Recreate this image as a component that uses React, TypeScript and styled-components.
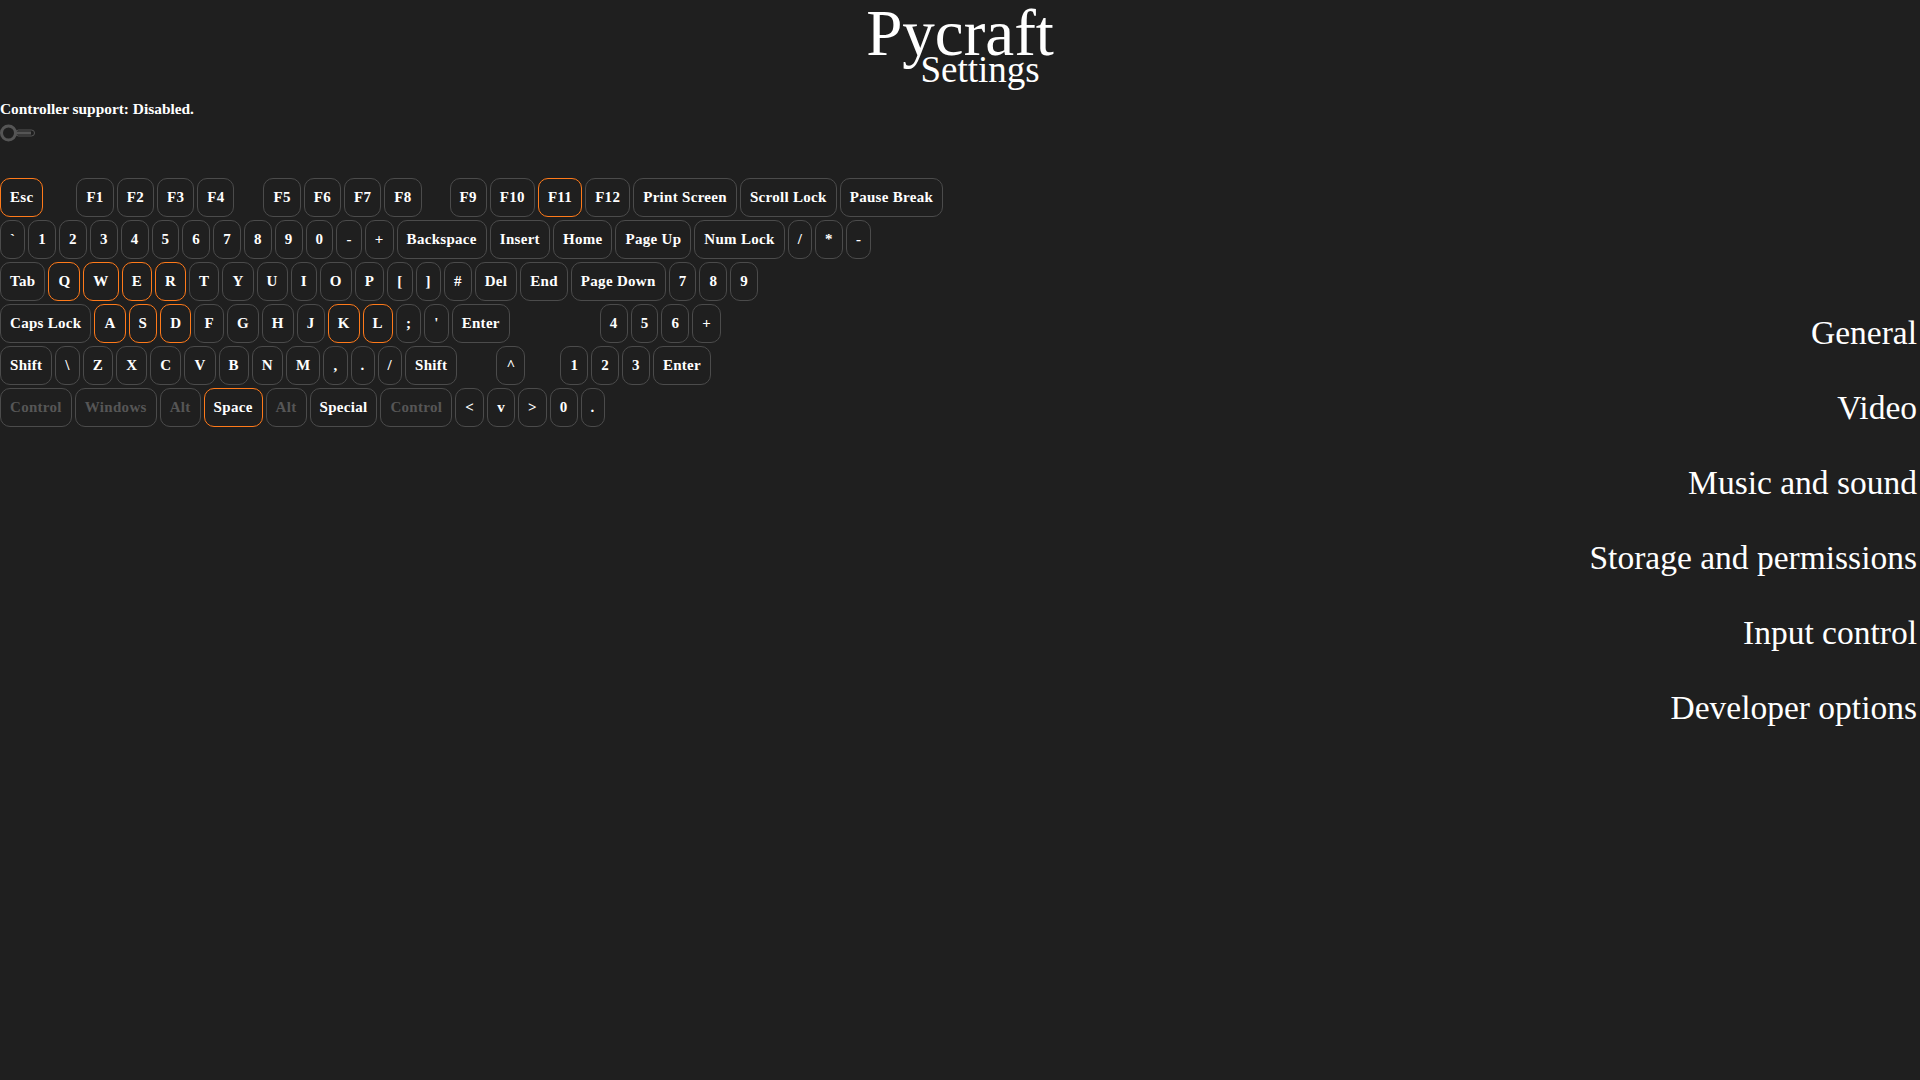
import React from "react";
import styled, { createGlobalStyle } from "styled-components";

const GlobalStyle = createGlobalStyle`
  html, body {
    margin: 0;
    padding: 0;
    background: #1f1f1f;
    color: #ffffff;
    font-family: "Liberation Serif", "Times New Roman", serif;
  }
  #root { min-height: 1080px; }
`;

const Page = styled.div`
  width: 1920px;
  height: 1080px;
  background: #1f1f1f;
  display: flex;
  flex-direction: column;
  overflow: hidden;
`;

const Header = styled.header`
  display: flex;
  flex-direction: column;
  align-items: center;
  padding-top: 7px;
`;

const Title = styled.h1`
  margin: 0;
  font-weight: 400;
  font-size: 65px;
  line-height: 52px;
  color: #ffffff;
`;

const Subtitle = styled.div`
  font-size: 37px;
  line-height: 21px;
  padding-left: 40px;
  color: #ffffff;
`;

const Body = styled.div`
  display: flex;
  justify-content: space-between;
  align-items: flex-start;
  padding-top: 3px;
`;

const LeftColumn = styled.div`
  display: flex;
  flex-direction: column;
  padding-top: 17px;
`;

const Status = styled.div`
  font-size: 15.4px;
  font-weight: 700;
  line-height: 18px;
  color: #ffffff;
`;

const ToggleWrap = styled.div`
  margin-top: 6px;
  height: 19px;
  width: 36px;
`;

const Keyboard = styled.div`
  margin-top: 35px;
  display: flex;
  flex-direction: column;
  gap: 3px;
`;

const Row = styled.div`
  display: flex;
  gap: 3px;
`;

type Variant = "normal" | "active" | "disabled";

const Key = styled.div<{ $variant: Variant }>`
  box-sizing: border-box;
  height: 39px;
  padding: 0 9px;
  border: 1px solid
    ${(p) => (p.$variant === "active" ? "#ff7a1a" : "#4b4b4b")};
  border-radius: 10px;
  display: flex;
  align-items: center;
  justify-content: center;
  font-size: 15px;
  font-weight: 700;
  letter-spacing: 0.3px;
  white-space: nowrap;
  color: ${(p) => (p.$variant === "disabled" ? "#565656" : "#ffffff")};
`;

const Spacer = styled.div<{ $w: number }>`
  width: ${(p) => p.$w}px;
  flex: none;
`;

const Nav = styled.nav`
  display: flex;
  flex-direction: column;
  align-items: flex-end;
  padding-top: 212px;
  padding-right: 3px;
`;

const NavItem = styled.div`
  font-size: 33.5px;
  line-height: 75px;
  color: #ffffff;
  white-space: nowrap;
`;

type Item = { l?: string; v?: Variant; s?: number };

const A: Variant = "active";
const D: Variant = "disabled";

const k = (l: string, v: Variant = "normal"): Item => ({ l, v });
const sp = (s: number): Item => ({ s });

const rows: Item[][] = [
  [
    k("Esc", A), sp(27), k("F1"), k("F2"), k("F3"), k("F4"), sp(23),
    k("F5"), k("F6"), k("F7"), k("F8"), sp(22), k("F9"), k("F10"),
    k("F11", A), k("F12"), k("Print Screen"), k("Scroll Lock"), k("Pause Break"),
  ],
  [
    k("`"), k("1"), k("2"), k("3"), k("4"), k("5"), k("6"), k("7"), k("8"),
    k("9"), k("0"), k("-"), k("+"), k("Backspace"), k("Insert"), k("Home"),
    k("Page Up"), k("Num Lock"), k("/"), k("*"), k("-"),
  ],
  [
    k("Tab"), k("Q", A), k("W", A), k("E", A), k("R", A), k("T"), k("Y"),
    k("U"), k("I"), k("O"), k("P"), k("["), k("]"), k("#"), k("Del"),
    k("End"), k("Page Down"), k("7"), k("8"), k("9"),
  ],
  [
    k("Caps Lock"), k("A", A), k("S", A), k("D", A), k("F"), k("G"), k("H"),
    k("J"), k("K", A), k("L", A), k(";"), k("'"), k("Enter"), sp(84),
    k("4"), k("5"), k("6"), k("+"),
  ],
  [
    k("Shift"), k("\\"), k("Z"), k("X"), k("C"), k("V"), k("B"), k("N"),
    k("M"), k(","), k("."), k("/"), k("Shift"), sp(33), k("^"), sp(29),
    k("1"), k("2"), k("3"), k("Enter"),
  ],
  [
    k("Control", D), k("Windows", D), k("Alt", D), k("Space", A), k("Alt", D),
    k("Special"), k("Control", D), k("<"), k("v"), k(">"), k("0"), k("."),
  ],
];

const navItems = [
  "General",
  "Video",
  "Music and sound",
  "Storage and permissions",
  "Input control",
  "Developer options",
];

const Toggle = () => (
  <svg width="36" height="19" viewBox="0 0 36 19">
    <rect x="15.5" y="6" width="19" height="6" rx="3" fill="none" stroke="#555" strokeWidth="1" />
    <rect x="15" y="7.5" width="16" height="3" fill="#555" />
    <circle cx="8.5" cy="9" r="7" fill="none" stroke="#555" strokeWidth="3" />
  </svg>
);

export default function App() {
  return (
    <Page>
      <GlobalStyle />
      <Header>
        <Title>Pycraft</Title>
        <Subtitle>Settings</Subtitle>
      </Header>
      <Body>
        <LeftColumn>
          <Status>Controller support: Disabled.</Status>
          <ToggleWrap>
            <Toggle />
          </ToggleWrap>
          <Keyboard>
            {rows.map((row, ri) => (
              <Row key={ri}>
                {row.map((it, i) =>
                  it.s !== undefined ? (
                    <Spacer key={i} $w={it.s} />
                  ) : (
                    <Key key={i} $variant={it.v as Variant}>
                      {it.l}
                    </Key>
                  )
                )}
              </Row>
            ))}
          </Keyboard>
        </LeftColumn>
        <Nav>
          {navItems.map((n) => (
            <NavItem key={n}>{n}</NavItem>
          ))}
        </Nav>
      </Body>
    </Page>
  );
}
